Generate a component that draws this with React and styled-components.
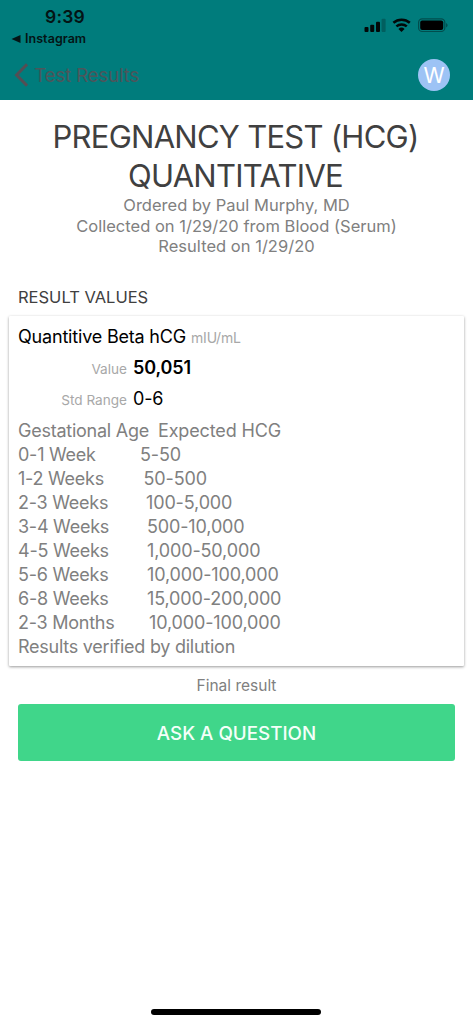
import React from "react";
import styled, { createGlobalStyle } from "styled-components";

const Global = createGlobalStyle`
  * { box-sizing: border-box; }
  body {
    margin: 0;
    background: #fff;
    font-family: Inter, "Liberation Sans", sans-serif;
    white-space: nowrap;
  }
`;

const Screen = styled.div`
  width: 473px;
  height: 1024px;
  display: flex;
  flex-direction: column;
  overflow: hidden;
`;

const Header = styled.header`
  height: 100px;
  flex: none;
  background: #007c7c;
  display: flex;
  flex-direction: column;
`;

const StatusBar = styled.div`
  height: 50px;
  display: flex;
  justify-content: space-between;
  padding: 6px 25px 0 11px;
`;

const StatusLeft = styled.div`
  color: #041415;
`;

const Clock = styled.div`
  padding-left: 34px;
  font-size: 17.5px;
  line-height: 21px;
  font-weight: 600;
  letter-spacing: 0.2px;
`;

const BackToApp = styled.div`
  display: flex;
  align-items: center;
  gap: 4px;
  font-size: 12.5px;
  line-height: 24px;
  font-weight: 600;
  letter-spacing: 0.05px;
`;

const StatusIcons = styled.div`
  display: flex;
  align-items: flex-start;
  padding-top: 11px;
`;

const NavBar = styled.div`
  height: 50px;
  display: flex;
  align-items: center;
  justify-content: space-between;
  padding: 0 23px 0 14px;
`;

const BackButton = styled.div`
  display: flex;
  align-items: center;
  gap: 6px;
  color: #4b565b;
  font-size: 19px;
  letter-spacing: -0.3px;
`;

const Avatar = styled.div`
  width: 32px;
  height: 32px;
  border-radius: 50%;
  background: #9dc3f5;
  color: #fff;
  display: flex;
  align-items: center;
  justify-content: center;
  font-size: 21.5px;
  font-weight: 400;
`;

const Summary = styled.section`
  padding-top: 17px;
  text-align: center;
`;

const Title = styled.h1`
  margin: 0;
  padding-right: 2px;
  color: #404040;
  font-size: 31px;
  line-height: 39px;
  font-weight: 400;
  letter-spacing: -0.73px;
`;

const Detail = styled.div`
  color: #808080;
  font-size: 16.5px;
  line-height: 20.5px;
  letter-spacing: 0.02px;
`;

const SectionTitle = styled.h2`
  margin: 30px 0 0 18px;
  color: #404040;
  font-size: 16.5px;
  line-height: 21px;
  font-weight: 400;
`;

const Card = styled.section`
  height: 350px;
  flex: none;
  margin: 8px 9px 0;
  padding: 5px 9px 0;
  background: #fff;
  border-radius: 1px;
  box-shadow: 0 1px 3px rgba(0, 0, 0, 0.4);
`;

const TestName = styled.div`
  display: flex;
  align-items: baseline;
  gap: 5px;
  height: 31px;
  color: #000;
  font-size: 18px;
  line-height: 32px;
  letter-spacing: -0.19px;
`;

const Unit = styled.span`
  color: #a8a8a8;
  font-size: 14px;
`;

const Field = styled.div`
  display: grid;
  grid-template-columns: 109px 1fr;
  column-gap: 6px;
  align-items: baseline;
  height: 31px;
  line-height: 31px;
`;

const FieldLabel = styled.span`
  color: #a8a8a8;
  font-size: 13.6px;
  text-align: right;
`;

const FieldValue = styled.span`
  color: #000;
  font-size: 18px;
  font-weight: ${(p) => (p.$bold ? 600 : 400)};
  letter-spacing: -0.15px;
`;

const Notes = styled.div`
  padding-top: 5px;
  color: #808080;
  font-size: 18px;
  line-height: 24px;
  letter-spacing: -0.25px;
`;

const NoteRow = styled.div`
  display: grid;
  grid-template-columns: ${(p) => p.$indent}px 1fr;
`;

const Level = styled.span`
  letter-spacing: -0.14px;
`;

const FinalNote = styled.div`
  margin-top: 9px;
  text-align: center;
  color: #808080;
  font-size: 15.5px;
  line-height: 22px;
`;

const AskButton = styled.button`
  height: 57px;
  flex: none;
  margin: 7px 18px 0;
  padding: 2px 0 0;
  border: 0;
  border-radius: 3px;
  background: #40d68a;
  color: #f4fff9;
  font-family: inherit;
  font-size: 18.8px;
  font-weight: 500;
`;

const HomeIndicator = styled.div`
  width: 170px;
  height: 6px;
  margin: auto auto 9px 151px;
  border-radius: 3px;
  background: #000;
  flex: none;
`;

const ranges = [
  ["Gestational Age", "Expected HCG", 140],
  ["0-1 Week", "5-50", 122],
  ["1-2 Weeks", "50-500", 125.5],
  ["2-3 Weeks", "100-5,000", 128],
  ["3-4 Weeks", "500-10,000", 129],
  ["4-5 Weeks", "1,000-50,000", 129],
  ["5-6 Weeks", "10,000-100,000", 129],
  ["6-8 Weeks", "15,000-200,000", 129],
  ["2-3 Months", "10,000-100,000", 131],
];

const StatusGlyphs = () => (
  <svg width="84" height="16" viewBox="0 0 84 16">
    <g fill="#020808">
      <rect x="0.5" y="10" width="4" height="5" rx="1" />
      <rect x="6.2" y="7.7" width="4" height="7.3" rx="1" />
      <rect x="12" y="4.8" width="4" height="10.2" rx="1" />
      <rect x="17.6" y="1.8" width="4" height="13.2" rx="1" opacity="0.25" />
      <path d="M34.4 12l3.1 3 3.1-3a4.6 4.6 0 0 0-6.2 0z" />
    </g>
    <g fill="none" stroke="#020808" strokeWidth="2.5">
      <path d="M29.4 5.8a12.3 12.3 0 0 1 16.4 0" />
      <path d="M32.4 9.4a7.8 7.8 0 0 1 10.4 0" />
    </g>
    <rect x="54.6" y="1.9" width="26.2" height="12.6" rx="3.6" fill="none" stroke="#020808" strokeOpacity="0.4" strokeWidth="1.2" />
    <rect x="56.2" y="3.5" width="23" height="9.4" rx="2" fill="#000" />
    <path d="M82.2 6v4.4c1.8-.7 1.8-3.7 0-4.4z" fill="#020808" opacity="0.45" />
  </svg>
);

export default function App() {
  return (
    <Screen>
      <Global />
      <Header>
        <StatusBar>
          <StatusLeft>
            <Clock>9:39</Clock>
            <BackToApp>
              <svg width="10" height="8" viewBox="0 0 10 8">
                <path d="M0.5 4L9.5 0v8z" fill="#041415" />
              </svg>
              Instagram
            </BackToApp>
          </StatusLeft>
          <StatusIcons>
            <StatusGlyphs />
          </StatusIcons>
        </StatusBar>
        <NavBar>
          <BackButton>
            <svg width="14" height="24" viewBox="0 0 14 24">
              <path d="M13 1.3L2.6 12 13 22.7" fill="none" stroke="#544e54" strokeWidth="3" />
            </svg>
            Test Results
          </BackButton>
          <Avatar>W</Avatar>
        </NavBar>
      </Header>
      <Summary>
        <Title>
          PREGNANCY TEST (HCG)
          <br />
          QUANTITATIVE
        </Title>
        <Detail>Ordered by Paul Murphy, MD</Detail>
        <Detail>Collected on 1/29/20 from Blood (Serum)</Detail>
        <Detail>Resulted on 1/29/20</Detail>
      </Summary>
      <SectionTitle>RESULT VALUES</SectionTitle>
      <Card>
        <TestName>
          Quantitive Beta hCG <Unit>mIU/mL</Unit>
        </TestName>
        <Field>
          <FieldLabel>Value</FieldLabel>
          <FieldValue $bold>50,051</FieldValue>
        </Field>
        <Field>
          <FieldLabel>Std Range</FieldLabel>
          <FieldValue>0-6</FieldValue>
        </Field>
        <Notes>
          {ranges.map(([age, level, indent]) => (
            <NoteRow key={age} $indent={indent}>
              <span>{age}</span>
              <Level>{level}</Level>
            </NoteRow>
          ))}
          <div>Results verified by dilution</div>
        </Notes>
      </Card>
      <FinalNote>Final result</FinalNote>
      <AskButton>ASK A QUESTION</AskButton>
      <HomeIndicator />
    </Screen>
  );
}
